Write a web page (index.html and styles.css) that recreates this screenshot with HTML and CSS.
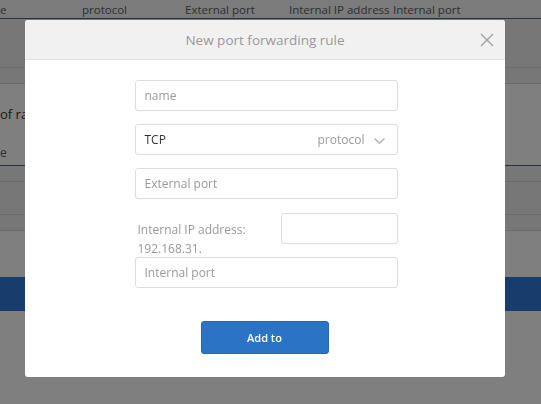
FILE: index.html
```html
<!DOCTYPE html>
<html>
<head>
<meta charset="utf-8">
<link rel="stylesheet" href="styles.css">
</head>
<body>
<div class="page">
  <div class="thead">
    <span class="c c1">e</span>
    <span class="c c2">protocol</span>
    <span class="c c3">External port</span>
    <span class="c c4">Internal IP address</span>
    <span class="c c5">Internal port</span>
  </div>
  <div class="row row-tall"></div>
  <div class="row row-short"></div>
  <div class="section-title">of range rules</div>
  <div class="thead thead2">
    <span class="c c1">e</span>
  </div>
  <div class="row row-short"></div>
  <div class="row row-mid"></div>
  <div class="row row-short"></div>
  <div class="blue-bar"></div>
</div>

<div class="overlay"></div>

<div class="modal">
  <div class="modal-header">
    <span class="modal-title">New port forwarding rule</span>
    <svg class="close" width="14" height="14" viewBox="0 0 14 14"><path d="M1 1 L13 13 M13 1 L1 13" stroke="#a0a0a0" stroke-width="1.4" fill="none"/></svg>
  </div>
  <div class="modal-body">
    <div class="form">
      <div class="field"><span class="ph">name</span></div>
      <div class="field select">
        <span class="val">TCP</span>
        <span class="sel-right"><span class="ph">protocol</span>
          <svg class="chev" width="11" height="6" viewBox="0 0 11 6"><path d="M0.5 0.5 L5.5 5.2 L10.5 0.5" stroke="#aaa" stroke-width="1.2" fill="none"/></svg>
        </span>
      </div>
      <div class="field"><span class="ph">External port</span></div>
      <div class="ip-row">
        <div class="ip-label">Internal IP address:<br>192.168.31.</div>
        <div class="field small"></div>
      </div>
      <div class="field"><span class="ph">Internal port</span></div>
      <div class="actions"><button class="btn">Add to</button></div>
    </div>
  </div>
</div>
</body>
</html>
```
FILE: styles.css
```css
html, body {
  margin: 0;
  padding: 0;
  background: #ffffff;
  font-family: "Open Sans", "Noto Sans", sans-serif;
  width: 541px;
  height: 404px;
  overflow: hidden;
}

.page {
  display: flex;
  flex-direction: column;
}

.thead {
  height: 18px;
  background: #f6f6f6;
  border-bottom: 1px solid #4a6888;
  display: flex;
  align-items: center;
  font-size: 11.5px;
  color: #5a6068;
}
.thead .c { white-space: nowrap; }
.c1 { width: 82px; }
.c2 { width: 103px; }
.c3 { width: 104px; }
.c4 { width: 104px; }

.row {
  background: #eeeeee;
  border-bottom: 1px solid #d6d6d6;
}
.row-tall { height: 48px; }
.row-short { height: 15px; }
.row-mid { height: 32px; }

.section-title {
  height: 56px;
  display: flex;
  align-items: center;
  font-size: 13px;
  color: #333;
  padding-top: 4px;
  box-sizing: border-box;
  white-space: nowrap;
}

.thead2 {
  height: 25px;
  background: #ffffff;
  color: #506070;
  font-size: 12px;
}

.blue-bar {
  margin-top: 46px;
  height: 34px;
  background: #2d7bd6;
}

.overlay {
  position: fixed;
  inset: 0;
  background: rgba(0, 0, 0, 0.5);
}

.modal {
  position: fixed;
  left: 25px;
  top: 20px;
  width: 480px;
  height: 357px;
  background: #ffffff;
  border-radius: 3px;
  overflow: hidden;
  display: flex;
  flex-direction: column;
}

.modal-header {
  height: 39px;
  background: #f1f1f1;
  border-bottom: 1px solid #e2e2e2;
  display: flex;
  align-items: center;
  justify-content: center;
  position: relative;
}
.modal-title {
  font-size: 13.5px;
  color: #999;
}
.close {
  position: absolute;
  right: 11px;
  top: 13px;
}

.modal-body {
  display: flex;
  justify-content: center;
  padding-top: 20px;
  padding-left: 2px;
}

.form {
  width: 263px;
  display: flex;
  flex-direction: column;
}

.field {
  height: 31px;
  box-sizing: border-box;
  border: 1px solid #dcdcdc;
  border-radius: 3px;
  padding: 0 9px;
  display: flex;
  align-items: center;
  font-size: 12px;
  margin-bottom: 13px;
}
.ph { color: #999; }
.val { color: #333; }

.select { justify-content: space-between; padding-right: 12px; }
.sel-right { display: flex; align-items: center; gap: 9px; }
.chev { margin-top: 2px; }

.ip-row {
  display: flex;
  justify-content: space-between;
  height: 44px;
  margin-top: 1px;
}
.ip-label {
  font-size: 12px;
  color: #999;
  line-height: 19px;
  padding-top: 7px;
  padding-left: 3px;
}
.field.small {
  width: 117px;
  margin-bottom: 0;
}

.actions {
  display: flex;
  justify-content: center;
  margin-top: 20px;
}
.btn {
  width: 128px;
  height: 33px;
  background: #2b74c5;
  border: 1px solid #2466b2;
  border-radius: 3px;
  color: #ffffff;
  font-family: "Open Sans", sans-serif;
  font-size: 11px;
  font-weight: 600;
  padding: 0;
  margin-left: -3px;
}
```
